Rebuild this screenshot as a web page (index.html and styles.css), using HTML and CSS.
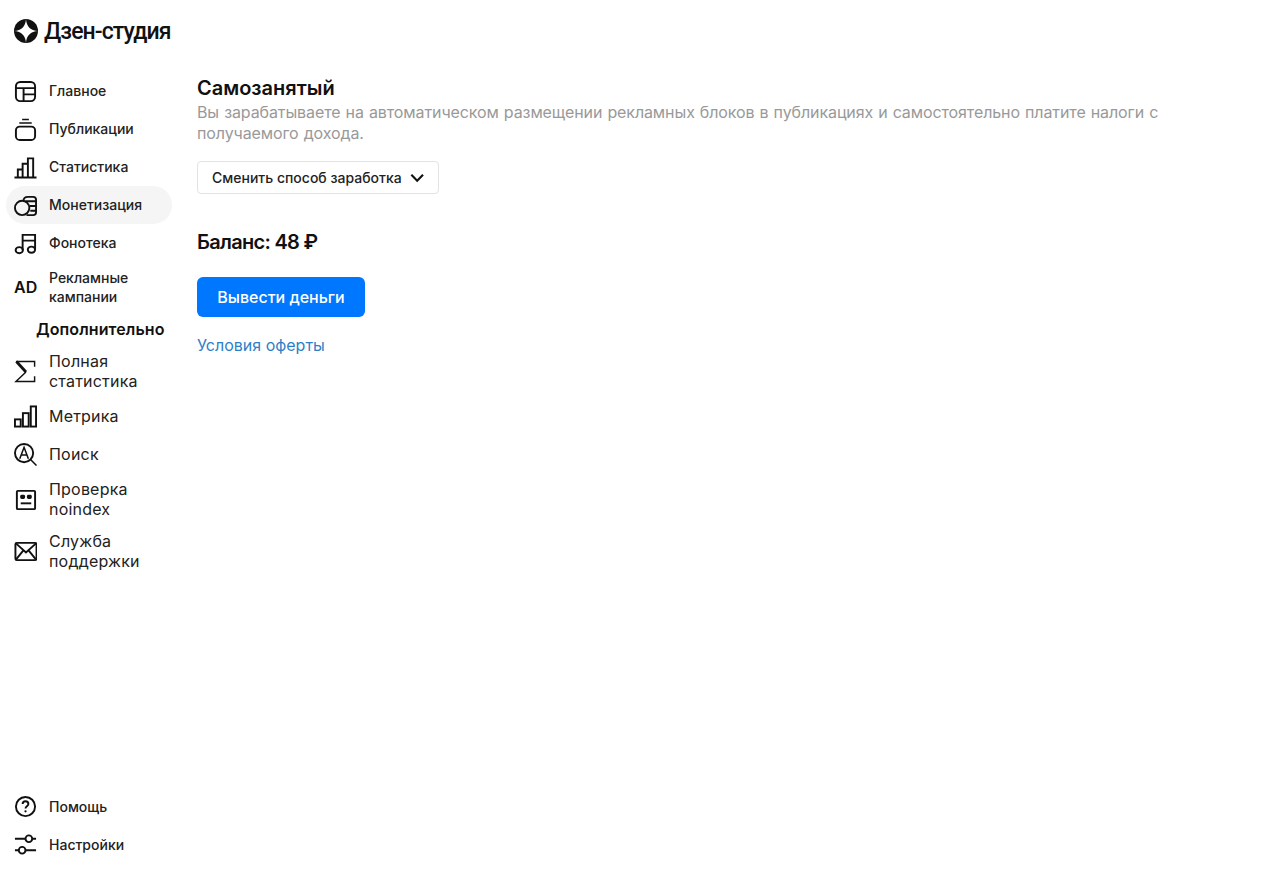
FILE: index.html
```html
<!DOCTYPE html>
<html lang="ru">
<head>
<meta charset="utf-8">
<title>Дзен-студия</title>
<link rel="stylesheet" href="styles.css">
</head>
<body>
<div class="app">
  <aside class="sidebar">
    <div class="logo">
      <svg class="logo-mark" width="24" height="24" viewBox="0 0 24 24"><circle cx="12" cy="12" r="12" fill="#111"/><path d="M12 0c.5 7.500 4.500 11.500 12 12-7.500.5-11.500 4.500-12 12-.5-7.500-4.500-11.500-12-12 7.500-.5 11.500-4.500 12-12z" fill="#fff"/></svg>
      <span class="logo-text">Дзен-студия</span>
    </div>
    <nav class="nav">
      <a class="item"><svg class="ico" viewBox="0 0 24 24"><rect x="2" y="2" width="20" height="20" rx="4.500"/><path d="M2 8.500h20M10 8.500V22M10 15h12"/></svg><span class="lift">Главное</span></a>
      <a class="item"><svg class="ico" viewBox="0 0 24 24"><rect x="2" y="9" width="20" height="14" rx="4"/><path class="fine" d="M5.500 5.200h13M8.500 1.500h7"/></svg><span class="lift">Публикации</span></a>
      <a class="item"><svg class="ico" viewBox="0 0 24 24"><path d="M0.500 22.500h23M4 22v-8h5v8M9 22V8h5.500v14M14.500 22V2.500h5.500V22"/></svg><span class="lift">Статистика</span></a>
      <a class="item active"><svg class="ico" viewBox="0 0 24 24"><path d="M10 7c0-2.500 2-4 4.500-4H20a3 3 0 0 1 3 3v13a3 3 0 0 1-3 3h-7M12 7.500h11M16.500 12.500H23M17 17.500h6"/><circle cx="8.500" cy="14.500" r="7.500"/></svg><span class="lift">Монетизация</span></a>
      <a class="item"><svg class="ico" viewBox="0 0 24 24"><path d="M9 19V3h13v15M9 9h13"/><ellipse cx="5.500" cy="19" rx="3.800" ry="3.200"/><ellipse cx="18.200" cy="18.500" rx="3.800" ry="3.200"/></svg><span class="lift">Фонотека</span></a>
      <a class="item tall"><span class="ad">AD</span><span>Рекламные кампании</span></a>
      <div class="section-title">Дополнительно</div>
      <a class="item big two"><svg class="ico sigma" viewBox="0 0 24 24"><path class="sigma-thick" d="M2.500 1.500l10 11"/><path d="M2 1.500h19.500V7M21.500 17v5.500H2l10.500-10"/></svg><span>Полная статистика</span></a>
      <a class="item big"><svg class="ico" viewBox="0 0 24 24"><rect x="1" y="15" width="6" height="7.500"/><rect x="9.300" y="8.500" width="6" height="14"/><rect x="17.500" y="1.500" width="5.500" height="21"/></svg><span>Метрика</span></a>
      <a class="item big"><svg class="ico" viewBox="0 0 24 24"><circle cx="10.500" cy="10.500" r="9.500"/><path class="fine" d="M17.500 17.500l6 6M6 16.500l4.500-12 4.500 12M7.500 12.500h6"/></svg><span>Поиск</span></a>
      <a class="item big two"><svg class="ico" viewBox="0 0 24 24"><rect x="3" y="3" width="19" height="19" rx="1"/><path d="M7 16h11"/><rect class="solid" x="6.500" y="7" width="5" height="4.500" rx="1.500"/><rect class="solid" x="13.500" y="7" width="5" height="4.500" rx="1.500"/></svg><span>Проверка noindex</span></a>
      <a class="item big two"><svg class="ico" viewBox="0 0 24 24"><rect x="1.500" y="3" width="22" height="18" rx="1.500"/><path d="M2 3.500L12.500 13 23 3.500M2 20.500l8-10M23 20.500l-8-10"/></svg><span>Служба поддержки</span></a>
    </nav>
    <nav class="nav foot">
      <a class="item"><svg class="ico" viewBox="0 0 24 24"><circle cx="12" cy="12" r="10"/><path d="M9 9.500c0-2 1.300-3 3-3s3 1 3 2.800c0 2.400-3 2.500-3 4.700"/><circle class="solid" cx="12" cy="17" r="1.200"/></svg><span>Помощь</span></a>
      <a class="item"><svg class="ico" viewBox="0 0 24 24"><path d="M1 6h11M19 6h4M1 18h4M12 18h11"/><circle cx="15.500" cy="6" r="3.500"/><circle cx="8.500" cy="18" r="3.500"/></svg><span>Настройки</span></a>
    </nav>
  </aside>
  <main class="main">
    <h1 class="title">Самозанятый</h1>
    <p class="desc">Вы зарабатываете на автоматическом размещении рекламных блоков в публикациях и самостоятельно платите налоги с получаемого дохода.</p>
    <button class="select">Сменить способ заработка<svg width="16" height="10" viewBox="0 0 16 10"><path d="M1.500 1.500L8 8l6.500-6.500" fill="none" stroke="#111" stroke-width="2.400"/></svg></button>
    <div class="balance">Баланс: 48 ₽</div>
    <button class="primary">Вывести деньги</button>
    <a class="link">Условия оферты</a>
  </main>
</div>
</body>
</html>
```
FILE: styles.css
```css
* { box-sizing: border-box; }
html, body { margin: 0; height: 100%; background: #fff; }
body { font-family: "Inter", "Liberation Sans", sans-serif; color: #111; }
.app { display: flex; height: 887px; overflow: hidden; }
.sidebar { width: 197px; flex: none; display: flex; flex-direction: column; padding: 0 25px 24px 6px; }
.logo { display: flex; align-items: center; gap: 6px; height: 62px; padding-left: 8px; }
.logo-mark { flex: none; }
.logo-text { font-family: "Roboto", sans-serif; font-size: 23px; font-weight: 500; letter-spacing: -0.9px; white-space: nowrap; }
.nav { display: flex; flex-direction: column; margin-top: 10px; }
.foot { margin-top: auto; }
.item { display: flex; align-items: center; gap: 12px; height: 38px; padding-left: 8px; border-radius: 19px; font-size: 14px; font-weight: 500; line-height: 19px; color: #222; }
.item.active { background: #f5f5f5; }
.item.tall { height: 50px; }
.item.big { font-size: 16px; font-weight: 400; line-height: 20px; letter-spacing: 0.2px; }
.item.two { height: 52px; }
.lift { padding-bottom: 2px; }
.ico { width: 23px; height: 23px; flex: none; fill: none; stroke: #111; stroke-width: 2; }
.ico .solid { fill: #111; stroke: none; }
.ico .fine { stroke-width: 1.600; }
.sigma { stroke-width: 1.500; }
.ico .sigma-thick { stroke-width: 3; }
.ad { width: 23px; flex: none; font-size: 16px; font-weight: 600; color: #111; }
.section-title { font-size: 16px; font-weight: 600; letter-spacing: 0.1px; padding-left: 30px; padding-top: 1px; height: 33px; line-height: 33px; white-space: nowrap; }
.main { flex: 1; padding-top: 75px; }
.title { margin: 0 0 1px; font-size: 20px; font-weight: 600; line-height: 26px; }
.desc { margin: 0; width: 980px; font-size: 16px; line-height: 21px; color: #999; letter-spacing: -0.1px; word-spacing: 0.7px; }
.select { display: flex; align-items: center; gap: 8px; margin-top: 17px; height: 33px; width: 242px; padding: 0 14px; background: #fff; border: 1px solid #e3e3e3; border-radius: 4px; font: 500 14px "Inter", sans-serif; color: #222; white-space: nowrap; }
.balance { margin-top: 34px; font-size: 20px; font-weight: 600; letter-spacing: -0.7px; line-height: 28px; }
.primary { display: block; margin-top: 21px; width: 168px; height: 40px; border: 0; border-radius: 6px; background: #0077ff; color: #fff; font: 500 16px "Inter", sans-serif; }
.link { display: block; margin-top: 18px; font-size: 16px; line-height: 20px; color: #2f7fc8; }
```
